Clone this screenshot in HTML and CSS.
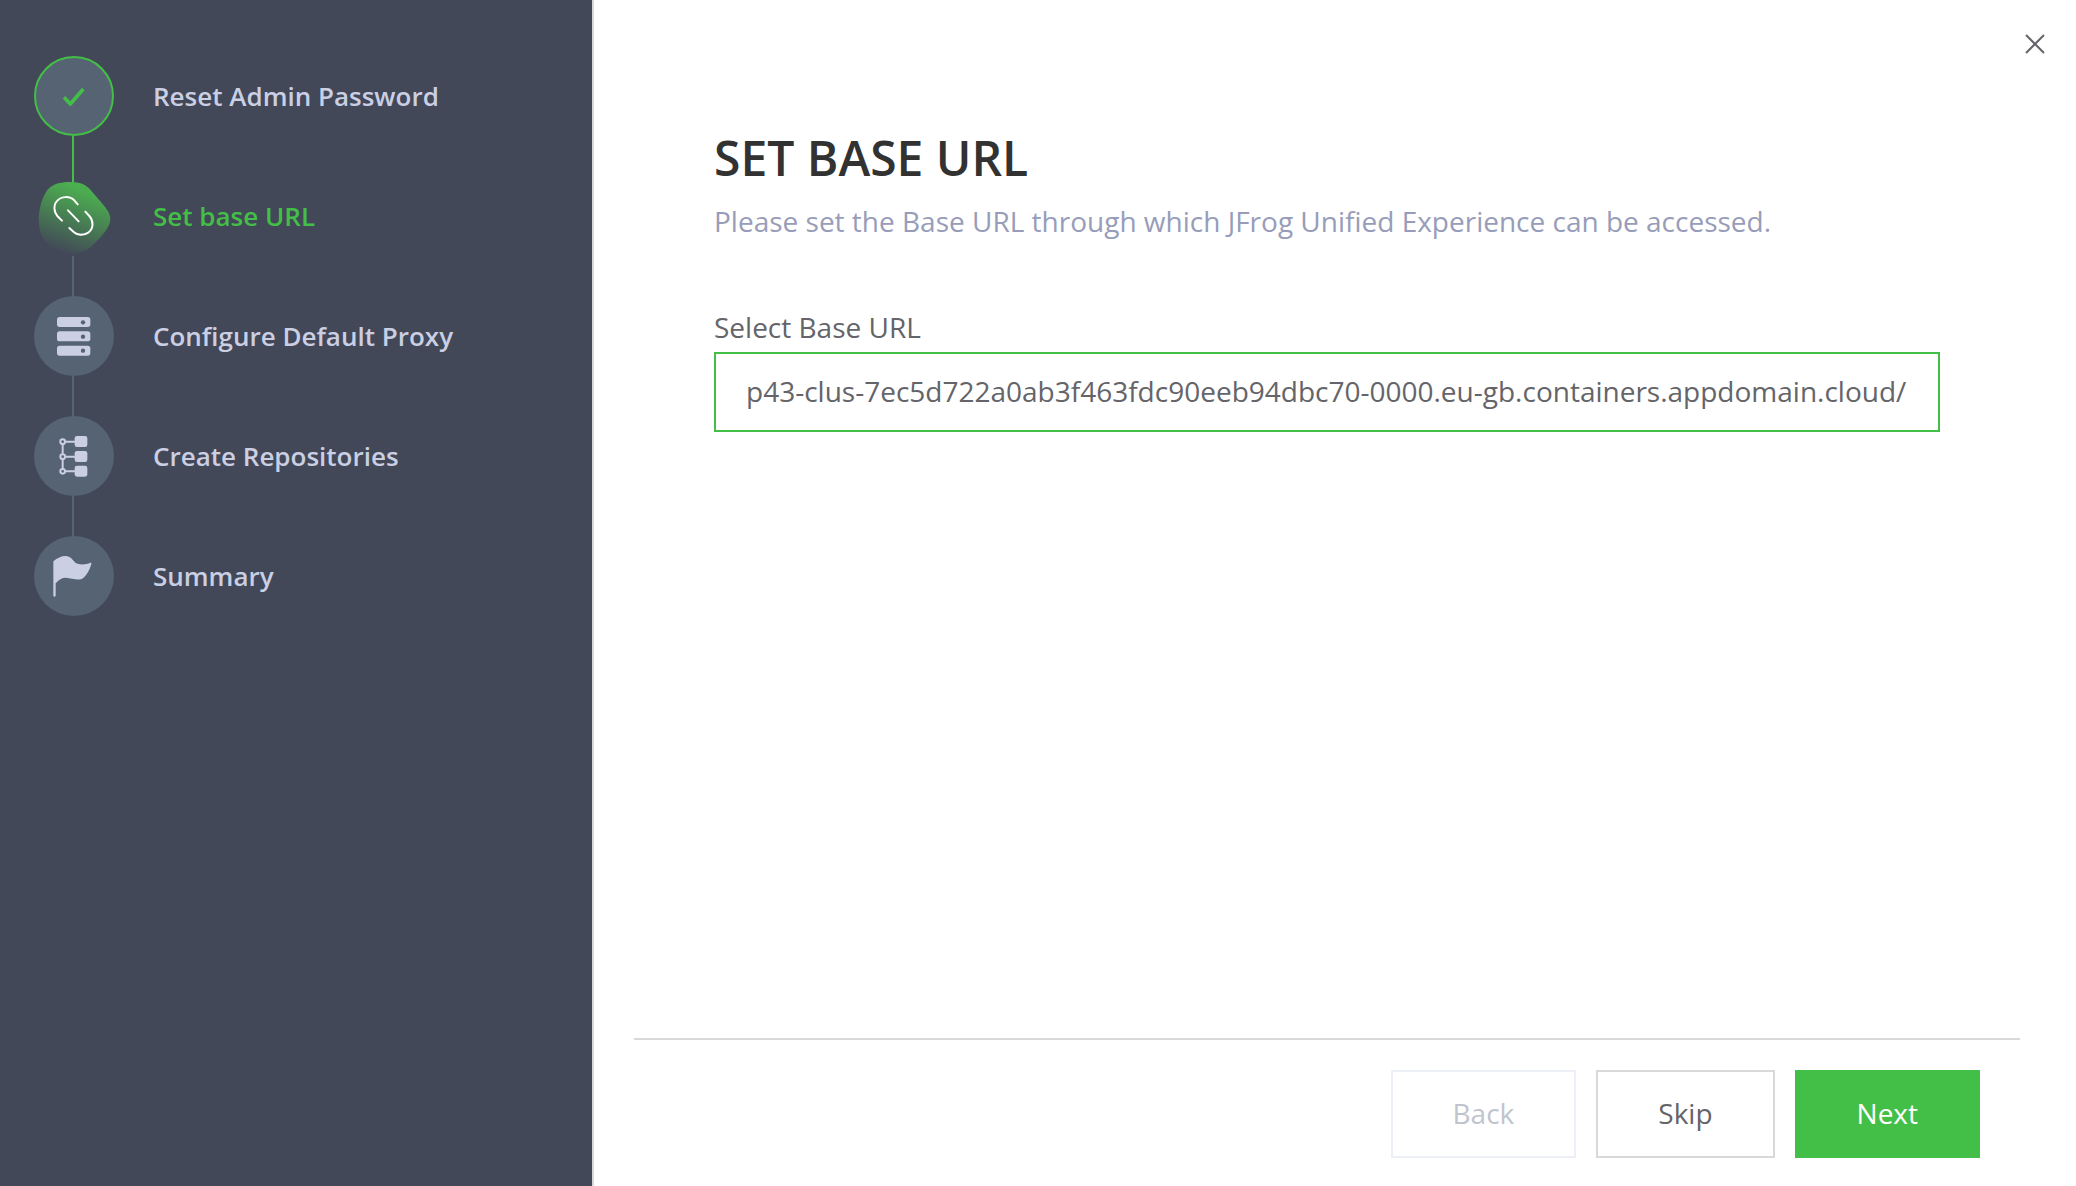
FILE: index.html
```html
<!DOCTYPE html>
<html lang="en">
<head>
<meta charset="utf-8">
<title>Set Base URL</title>
<link rel="stylesheet" href="styles.css">
</head>
<body>
<div class="wizard">
  <nav class="sidebar" aria-label="Setup steps">
    <ol class="steps">
      <li class="step step-done">
        <div class="step-row">
          <svg class="step-icon" viewBox="42 48 240 240" aria-hidden="true">
            <circle class="disc-done" cx="162" cy="168" r="117"/>
            <path class="check" d="M132 172L151 192L190 147"/>
          </svg>
          <span class="step-label">Reset Admin Password</span>
        </div>
      </li>
      <li class="step step-active" aria-current="step">
        <div class="step-row">
          <svg class="step-icon" viewBox="42 48 240 240" aria-hidden="true">
            <defs>
              <linearGradient id="blob" x1="0.7" y1="0" x2="0.34" y2="1">
                <stop offset="0" stop-color="#4caf50"/>
                <stop offset="0.15" stop-color="#4caf50" stop-opacity="0.96"/>
                <stop offset="1" stop-color="#4caf50" stop-opacity="0"/>
              </linearGradient>
            </defs>
            <path class="lead" d="M156 48h6v20h-6z"/>
            <path fill="url(#blob)" d="M142 66C172 64 196 70 212 90C222 103 240 122 253 138C264 152 271 164 271 177C271 202 244 230 220 254C204 270 180 280 152 280C122 280 98 270 82 253C64 234 56 208 56 176C57 148 66 112 82 90C96 74 116 67 142 66Z"/>
            <path class="link" d="M173 133L163 121C150 108 125 108 112 122C98 136 103 158 112 168L126 182M196 155L208 168C221 182 221 205 206 217C190 228 172 226 162 217L148 204M144 151L176 184"/>
          </svg>
          <span class="step-label">Set base URL</span>
        </div>
      </li>
      <li class="step">
        <div class="step-row">
          <svg class="step-icon" viewBox="42 48 240 240" aria-hidden="true">
            <circle class="disc" cx="162" cy="168" r="120"/>
            <g class="glyph">
              <rect x="111" y="111" width="100" height="30" rx="8"/>
              <rect x="111" y="154" width="100" height="30" rx="8"/>
              <rect x="111" y="197" width="100" height="30" rx="8"/>
            </g>
            <g class="disc">
              <circle cx="189" cy="127" r="6.5"/>
              <circle cx="189" cy="170" r="6.5"/>
              <circle cx="189" cy="212" r="6.5"/>
            </g>
          </svg>
          <span class="step-label">Configure Default Proxy</span>
        </div>
      </li>
      <li class="step">
        <div class="step-row">
          <svg class="step-icon" viewBox="42 48 240 240" aria-hidden="true">
            <circle class="disc" cx="162" cy="168" r="120"/>
            <path class="branch" d="M128 132V162M128 177V207M136 125H166M136 170H166M136 214H166"/>
            <g class="branch">
              <circle cx="128" cy="125" r="7"/>
              <circle cx="128" cy="170" r="7"/>
              <circle cx="128" cy="214" r="7"/>
            </g>
            <g class="glyph">
              <rect x="164" y="108" width="38" height="33" rx="7"/>
              <rect x="164" y="153" width="38" height="33" rx="7"/>
              <rect x="164" y="197" width="38" height="33" rx="7"/>
            </g>
          </svg>
          <span class="step-label">Create Repositories</span>
        </div>
      </li>
      <li class="step">
        <div class="step-row">
          <svg class="step-icon" viewBox="42 48 240 240" aria-hidden="true">
            <circle class="disc" cx="162" cy="168" r="120"/>
            <path class="glyph" d="M100 124C112 114 124 108 137 108C152 108 158 120 166 128C176 135 196 134 208 130C213 127 215 129 214 133C208 152 200 166 190 174C176 184 155 174 138 173C124 172 114 182 107 190V228Q103 232 100 228Z"/>
          </svg>
          <span class="step-label">Summary</span>
        </div>
      </li>
    </ol>
  </nav>

  <main class="main">
    <header class="topbar">
      <button class="close" type="button" aria-label="Close">
        <svg class="close-icon" viewBox="0 0 20 20" aria-hidden="true"><path d="M1 1L19 19M19 1L1 19"/></svg>
      </button>
    </header>
    <form class="form">
      <section class="content">
        <h1 class="title">SET BASE URL</h1>
        <p class="subtitle">Please set the Base URL through which JFrog Unified Experience can be accessed.</p>
        <label class="field-label" for="base-url">Select Base URL</label>
        <input class="field" id="base-url" type="text" value="p43-clus-7ec5d722a0ab3f463fdc90eeb94dbc70-0000.eu-gb.containers.appdomain.cloud/">
      </section>
      <footer class="actions">
        <button class="btn btn-back" type="button" disabled>Back</button>
        <button class="btn btn-skip" type="button">Skip</button>
        <button class="btn btn-next" type="submit">Next</button>
      </footer>
    </form>
  </main>
</div>
</body>
</html>
```
FILE: styles.css
```css
* {
  box-sizing: border-box;
}

body {
  margin: 0;
  background: #fff;
  color: #646469;
  font-family: "Open Sans", "Noto Sans", sans-serif;
  font-size: 28px;
  line-height: 40px;
}

.wizard {
  display: flex;
  min-height: 100vh;
}

/* Step list */
.sidebar {
  flex: none;
  width: 594px;
  padding: 56px 34px;
  background: #424857;
  border-right: 2px solid #d9d9d9;
}

.steps {
  margin: 0;
  padding: 0;
  list-style: none;
}

.step-row {
  display: flex;
  align-items: center;
  gap: 39px;
}

.step:not(:last-child)::after {
  content: "";
  display: block;
  width: 2px;
  height: 40px;
  margin-left: 38px;
  background: #566373;
}

.step-done:not(:last-child)::after {
  background: #43bf47;
}

.step-icon {
  flex: none;
  width: 80px;
  height: 80px;
}

.step-label {
  color: #cacfe4;
  font-size: 26px;
  font-weight: 600;
}

.step-active .step-label {
  color: #43bf47;
}

.disc {
  fill: #566373;
}

.disc-done {
  fill: #566373;
  stroke: #43bf47;
  stroke-width: 6;
}

.check {
  fill: none;
  stroke: #43bf47;
  stroke-width: 11;
  stroke-linejoin: round;
}

.lead {
  fill: #43bf47;
}

.link {
  fill: none;
  stroke: #fff;
  stroke-width: 6;
  stroke-linecap: round;
}

.glyph {
  fill: #cacfe4;
}

.branch {
  fill: none;
  stroke: #cacfe4;
  stroke-width: 6;
}

/* Main panel */
.main {
  display: flex;
  flex: 1;
  flex-direction: column;
  min-width: 0;
}

.topbar {
  display: flex;
  justify-content: flex-end;
  padding: 24px 21px 0;
}

.close {
  display: grid;
  place-items: center;
  width: 40px;
  height: 40px;
  padding: 0;
  border: 0;
  background: none;
  cursor: pointer;
}

.close-icon {
  width: 20px;
  height: 20px;
  fill: none;
  stroke: #646469;
  stroke-width: 2;
}

.form {
  display: flex;
  flex: 1;
  flex-direction: column;
  padding: 0 56px 28px 40px;
}

.content {
  display: flex;
  flex: 1;
  flex-direction: column;
  padding: 66px 80px 40px;
}

.title {
  margin: 0 0 15px;
  color: #323232;
  font-size: 48px;
  font-weight: 600;
  line-height: 56px;
}

.subtitle {
  margin: 0 0 66px;
  color: #979db9;
}

.field-label {
  margin-bottom: 5px;
}

.field {
  width: 100%;
  height: 80px;
  padding: 0 30px 2px;
  border: 2px solid #43bf47;
  outline: 0;
  background: #fff;
  color: inherit;
  font: inherit;
}

.actions {
  display: flex;
  justify-content: flex-end;
  gap: 20px;
  padding: 30px 40px 0;
  border-top: 2px solid #d9d9d9;
}

.btn {
  height: 88px;
  padding: 0 60px 2px;
  border: 2px solid #d9d9d9;
  background: #fff;
  color: inherit;
  font: inherit;
  cursor: pointer;
}

.btn-back {
  border-color: #eceff5;
  color: #c0c4ce;
}

.btn-next {
  border-color: #43bf47;
  background: #43bf47;
  color: #fff;
}
```
